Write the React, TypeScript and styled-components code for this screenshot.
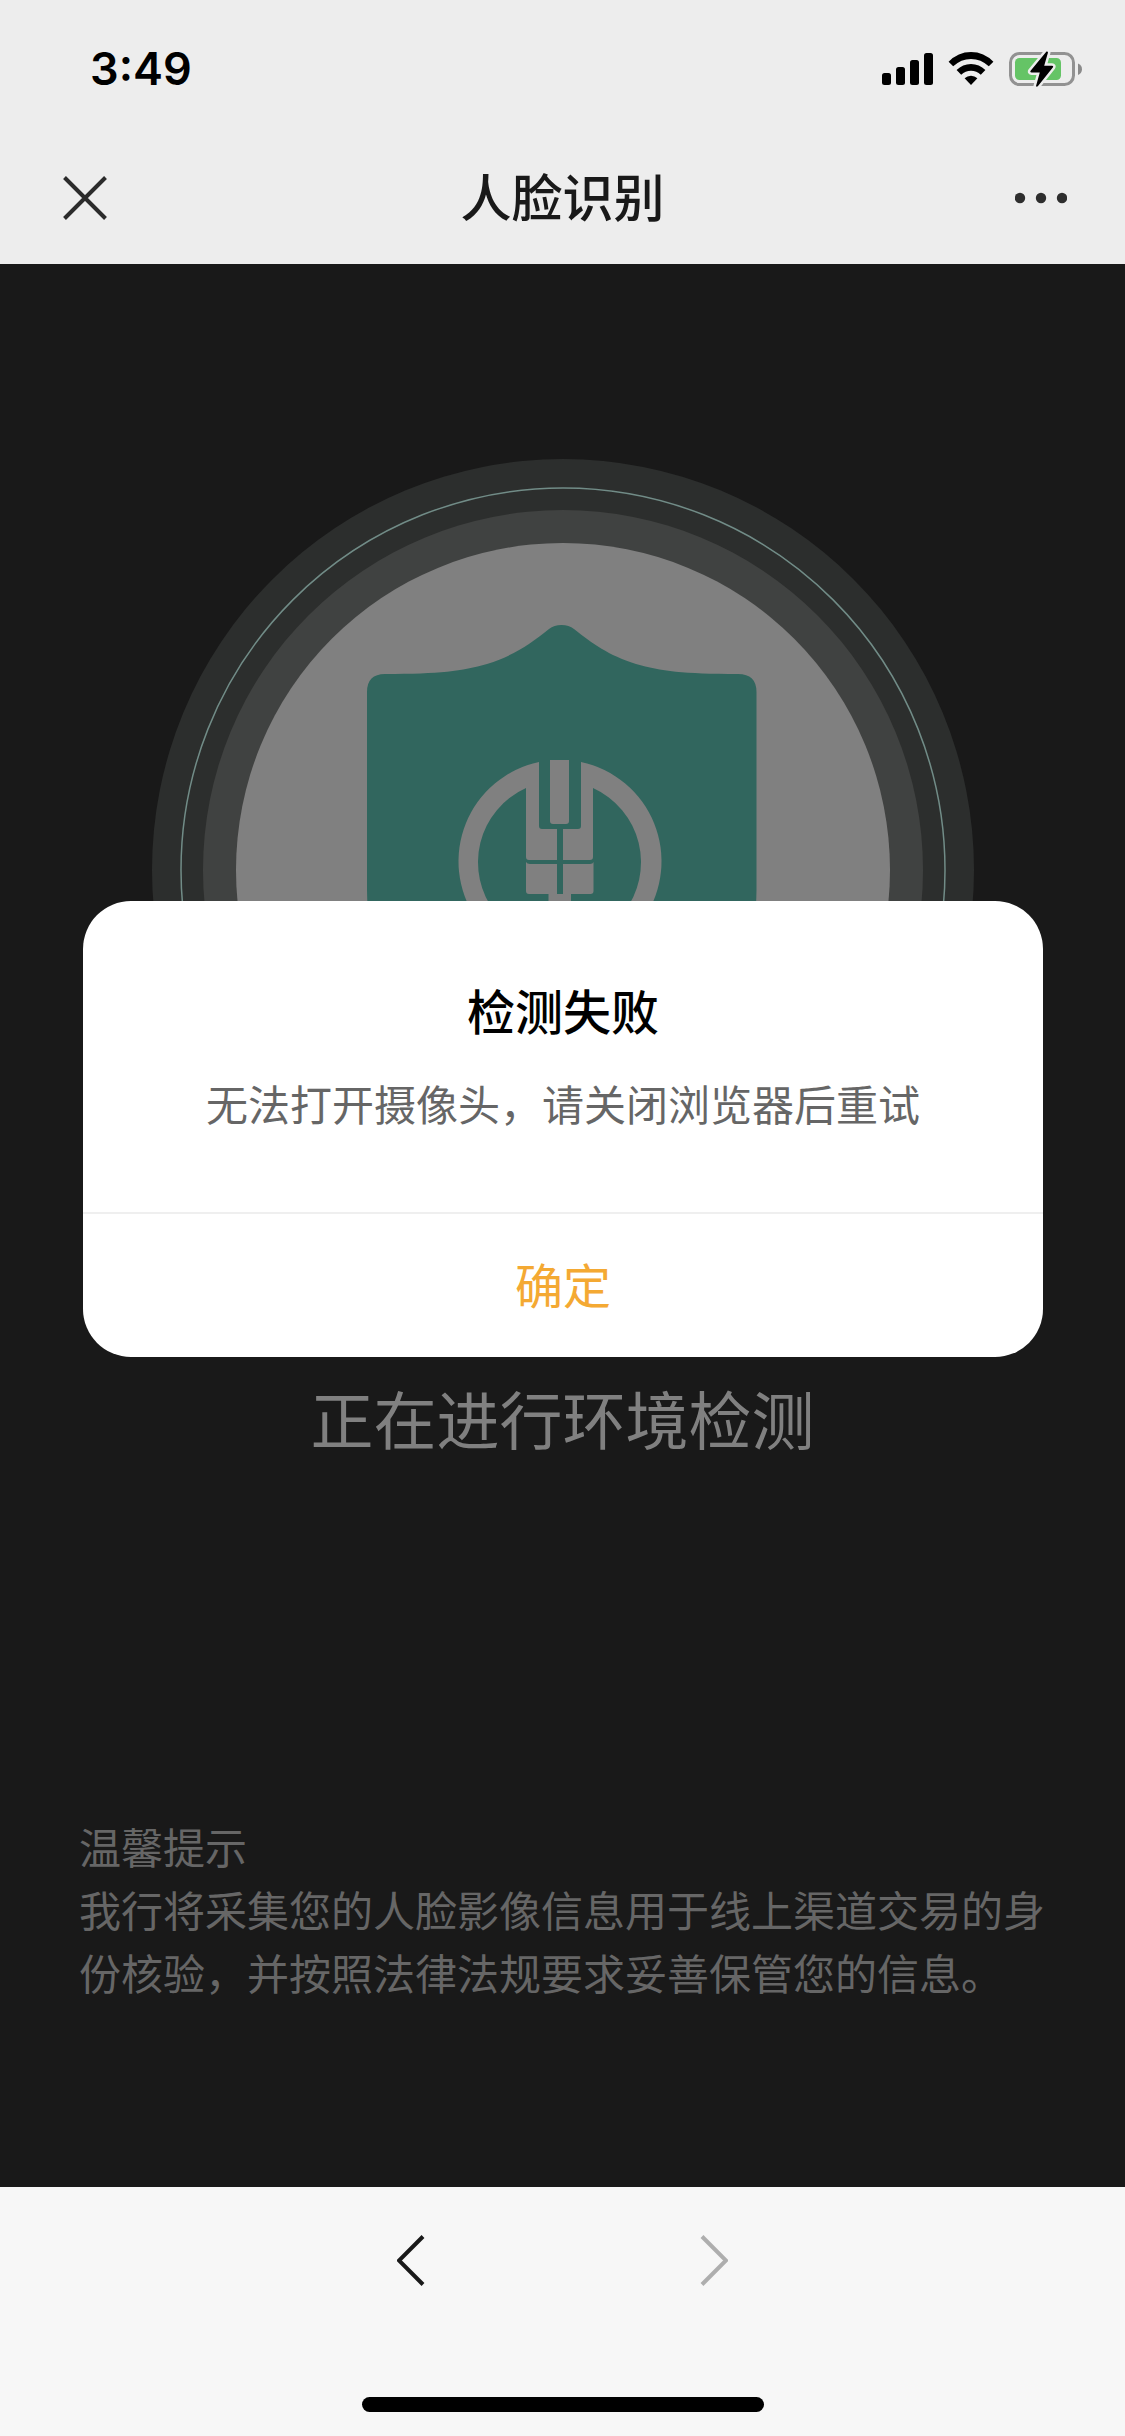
import React from 'react';
import styled, { createGlobalStyle } from 'styled-components';

const GlobalStyle = createGlobalStyle`
  *, *::before, *::after { box-sizing: border-box; }
  body { margin: 0; background: #191919; }
  svg { display: block; }
`;

const Screen = styled.div`
  display: flex;
  flex-direction: column;
  min-height: 100vh;
  font-family: 'Noto Sans CJK SC', sans-serif;
  font-weight: 400;
`;

const Header = styled.header`
  background: #ededed;
`;

const StatusBar = styled.div`
  display: flex;
  align-items: center;
  justify-content: space-between;
  height: 132px;
  padding: 6px 43px 0 90px;
`;

const Clock = styled.time`
  font-family: Inter, sans-serif;
  font-size: 45px;
  line-height: 56px;
  font-weight: 600;
  color: #000;
`;

const StatusIcons = styled.div`
  display: flex;
  align-items: center;
  gap: 15px;
`;

const TitleBar = styled.div`
  display: grid;
  grid-template-columns: 1fr auto 1fr;
  align-items: center;
  height: 132px;
  padding: 0 58px;
`;

const PageTitle = styled.h1`
  margin: 0;
  padding-bottom: 6px;
  font-size: 51px;
  line-height: 72px;
  font-weight: 500;
  color: #191919;
`;

const IconButton = styled.button<{ $align?: string }>`
  justify-self: ${(p) => p.$align ?? 'start'};
  padding: 0;
  border: 0;
  background: none;
  cursor: pointer;
  &:disabled { cursor: default; }
`;

const Main = styled.main`
  position: relative;
  flex: 1;
  display: flex;
  flex-direction: column;
  align-items: center;
  padding: 195px 79px 0;
  background: #191919;
`;

const StatusText = styled.p`
  margin: 94px 0 0;
  font-size: 63px;
  line-height: 84px;
  color: #808080;
`;

const Tips = styled.section`
  align-self: stretch;
  margin-top: 355px;
  font-size: 42px;
  line-height: 63px;
  color: #666;
`;

const TipsTitle = styled.h2`
  margin: 0;
  font: inherit;
`;

const TipsText = styled.p`
  margin: 0;
`;

const Overlay = styled.div`
  position: absolute;
  inset: 0;
  display: flex;
  align-items: flex-start;
  justify-content: center;
  padding: 637px 82px 0 83px;
`;

const Dialog = styled.div`
  flex: 1;
  max-width: 960px;
  overflow: hidden;
  border-radius: 48px;
  background: #fff;
  text-align: center;
`;

const DialogBody = styled.div`
  padding: 72px 48px 78px;
`;

const DialogTitle = styled.h2`
  margin: 0 0 26px;
  font-size: 48px;
  line-height: 72px;
  font-weight: 500;
  color: #000;
`;

const DialogText = styled.p`
  margin: 0;
  font-size: 42px;
  line-height: 63px;
  color: #666;
`;

const ConfirmButton = styled.button`
  width: 100%;
  height: 145px;
  padding: 0 0 6px;
  border: 0;
  border-top: 2px solid #efefef;
  background: none;
  font-family: inherit;
  font-size: 48px;
  line-height: 72px;
  color: #f4a933;
  cursor: pointer;
`;

const BottomBar = styled.footer`
  display: flex;
  flex-direction: column;
  align-items: center;
  padding: 48px 0 24px;
  background: #f7f7f7;
`;

const HistoryNav = styled.nav`
  display: flex;
  gap: 275px;
`;

const HomeIndicator = styled.div`
  width: 402px;
  height: 15px;
  margin-top: 111px;
  border-radius: 8px;
  background: #000;
`;

const SignalIcon = () => (
  <svg width="51" height="34" viewBox="0 0 51 34" aria-hidden="true">
    <rect x="0" y="21" width="9" height="12" rx="2.5" />
    <rect x="14" y="15" width="9" height="18" rx="2.5" />
    <rect x="28" y="8" width="9" height="25" rx="2.5" />
    <rect x="42" y="1" width="9" height="32" rx="2.5" />
  </svg>
);

const WifiIcon = () => (
  <svg width="46" height="34" viewBox="0 0 46 34" aria-hidden="true">
    <path d="M0.6 9.8Q10 0 23 0Q36 0 45.4 9.8L40.8 14.3Q33 6.9 23 6.9Q13 6.9 5.2 14.3Z" />
    <path d="M8.6 18Q14.7 12 23 12Q31.3 12 37.4 18L32.8 22.7Q28.6 18.8 23 18.8Q17.4 18.8 13.2 22.7Z" />
    <path d="M16.6 26.2Q19.3 23.7 23 23.7Q26.7 23.7 29.4 26.2L23 33Z" />
  </svg>
);

const BatteryIcon = () => (
  <svg width="73" height="36" viewBox="0 0 73 36" aria-hidden="true">
    <rect x="1.5" y="2.5" width="63" height="31" rx="9" fill="none" stroke="#929292" strokeWidth="3" />
    <path d="M69 12.5C71.6 13.5 73 15.6 73 18.2S71.6 23 69 24Z" fill="#8a8a8a" />
    <rect x="6" y="7" width="46" height="22" rx="4.5" fill="#65c466" />
    <path
      d="M37.5 0.5L21.6 19.8Q20.7 21.4 22.6 21.4H30.8L27 35Q27.6 36.3 29 35L43.8 16.4Q44.8 14.8 43 14.8H35.2L39 1.6Q38.8 0 37.5 0.5Z"
      fill="#000" stroke="#ededed" strokeWidth="5" strokeLinejoin="round" paintOrder="stroke"
    />
  </svg>
);

const CloseIcon = () => (
  <svg width="54" height="44" viewBox="-5 0 54 44" aria-hidden="true">
    <path d="M1.5 1.5L42.5 42.5M42.5 1.5L1.5 42.5" stroke="#2b2b2b" strokeWidth="4" />
  </svg>
);

const MoreIcon = () => (
  <svg width="52" height="12" viewBox="0 0 52 12" fill="#2e2e2e" aria-hidden="true">
    <circle cx="5" cy="6" r="5.2" />
    <circle cx="26" cy="6" r="5.2" />
    <circle cx="47" cy="6" r="5.2" />
  </svg>
);

const ChevronIcon = ({ forward = false }: { forward?: boolean }) => (
  <svg width="28" height="51" viewBox="0 0 28 51" fill="none" strokeWidth="4" aria-hidden="true">
    {forward ? (
      <path d="M2 1.5L26 25.5L2 49.5" stroke="#aeaeae" />
    ) : (
      <path d="M26 1.5L2 25.5L26 49.5" stroke="#191919" />
    )}
  </svg>
);

const ShieldBadge = () => (
  <svg width="822" height="822" viewBox="152 459 822 822" role="img" aria-label="安全检测">
    <circle cx="563" cy="870" r="411" fill="#2c2e2d" />
    <circle cx="563" cy="870" r="382" fill="none" stroke="#718c87" strokeWidth="1.5" />
    <circle cx="563" cy="870" r="360" fill="#404241" />
    <circle cx="563" cy="870" r="327" fill="#808080" />
    <path
      d="M385 674C440 674 462 671 487 664C515 655 530 644 549 629Q554 625 561.500 625Q569 625 574 629C593 644 608 655 636 664C661 671 683 674 738 674Q756.500 674 756.500 692V890C756.500 990 680 1060 561.500 1100C443 1060 367 990 367 890V692Q367 674 385 674Z"
      fill="#31665e"
    />
    <g fill="#808080">
      <path d="M539 762A101.500 101.500 0 1 0 581 762V826Q581 829 578 829H563V860H590Q593 860 593 857V788A81.500 81.500 0 1 1 526 788V857Q526 860 529 860H557V829H542Q539 829 539 826Z" />
      <path d="M550 760H569V821Q569 824 566 824H553Q550 824 550 821Z" />
      <path d="M526 862Q527 864 530 864H557V894H563V864H590Q593 864 593.500 862V891Q593.500 894 590.500 894H571V930H548.500V894H529Q526 894 526 891Z" />
    </g>
  </svg>
);

export default function App() {
  return (
    <>
      <GlobalStyle />
      <Screen>
        <Header>
          <StatusBar>
            <Clock>3:49</Clock>
            <StatusIcons>
              <SignalIcon />
              <WifiIcon />
              <BatteryIcon />
            </StatusIcons>
          </StatusBar>
          <TitleBar>
            <IconButton type="button" aria-label="关闭"><CloseIcon /></IconButton>
            <PageTitle>人脸识别</PageTitle>
            <IconButton type="button" aria-label="更多" $align="end"><MoreIcon /></IconButton>
          </TitleBar>
        </Header>
        <Main>
          <ShieldBadge />
          <StatusText>正在进行环境检测</StatusText>
          <Tips>
            <TipsTitle>温馨提示</TipsTitle>
            <TipsText>我行将采集您的人脸影像信息用于线上渠道交易的身份核验，并按照法律法规要求妥善保管您的信息。</TipsText>
          </Tips>
          <Overlay>
            <Dialog role="alertdialog" aria-labelledby="dialog-title" aria-describedby="dialog-text">
              <DialogBody>
                <DialogTitle id="dialog-title">检测失败</DialogTitle>
                <DialogText id="dialog-text">无法打开摄像头，请关闭浏览器后重试</DialogText>
              </DialogBody>
              <ConfirmButton type="button">确定</ConfirmButton>
            </Dialog>
          </Overlay>
        </Main>
        <BottomBar>
          <HistoryNav aria-label="浏览历史">
            <IconButton type="button" aria-label="后退"><ChevronIcon /></IconButton>
            <IconButton type="button" aria-label="前进" disabled><ChevronIcon forward /></IconButton>
          </HistoryNav>
          <HomeIndicator />
        </BottomBar>
      </Screen>
    </>
  );
}
